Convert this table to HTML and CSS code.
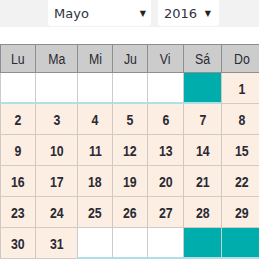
FILE: index.html
```html
<!DOCTYPE html>
<html lang="es">
<head>
<meta charset="utf-8">
<title>Calendario</title>
<link rel="stylesheet" href="styles.css">
</head>
<body>
<div class="toolbar">
  <div class="select month"><span>Mayo</span><span class="arrow">▼</span></div>
  <div class="select year"><span>2016</span><span class="arrow">▼</span></div>
</div>
<div class="calendar">
  <div class="head"><span>Lu</span></div>
  <div class="head"><span>Ma</span></div>
  <div class="head"><span>Mi</span></div>
  <div class="head"><span>Ju</span></div>
  <div class="head"><span>Vi</span></div>
  <div class="head"><span>Sá</span></div>
  <div class="head"><span>Do</span></div>

  <div class="cell empty"></div>
  <div class="cell empty"></div>
  <div class="cell empty"></div>
  <div class="cell empty"></div>
  <div class="cell empty"></div>
  <div class="cell empty teal"></div>
  <div class="cell day"><span>1</span></div>

  <div class="cell day"><span>2</span></div>
  <div class="cell day"><span>3</span></div>
  <div class="cell day"><span>4</span></div>
  <div class="cell day"><span>5</span></div>
  <div class="cell day"><span>6</span></div>
  <div class="cell day"><span>7</span></div>
  <div class="cell day"><span>8</span></div>

  <div class="cell day"><span>9</span></div>
  <div class="cell day"><span>10</span></div>
  <div class="cell day"><span>11</span></div>
  <div class="cell day"><span>12</span></div>
  <div class="cell day"><span>13</span></div>
  <div class="cell day"><span>14</span></div>
  <div class="cell day"><span>15</span></div>

  <div class="cell day"><span>16</span></div>
  <div class="cell day"><span>17</span></div>
  <div class="cell day"><span>18</span></div>
  <div class="cell day"><span>19</span></div>
  <div class="cell day"><span>20</span></div>
  <div class="cell day"><span>21</span></div>
  <div class="cell day"><span>22</span></div>

  <div class="cell day"><span>23</span></div>
  <div class="cell day"><span>24</span></div>
  <div class="cell day"><span>25</span></div>
  <div class="cell day"><span>26</span></div>
  <div class="cell day"><span>27</span></div>
  <div class="cell day"><span>28</span></div>
  <div class="cell day"><span>29</span></div>

  <div class="cell day"><span>30</span></div>
  <div class="cell day"><span>31</span></div>
  <div class="cell empty"></div>
  <div class="cell empty"></div>
  <div class="cell empty"></div>
  <div class="cell empty teal"></div>
  <div class="cell empty teal"></div>
</div>
</body>
</html>
```
FILE: styles.css
```css
html, body {
  margin: 0;
  padding: 0;
  overflow: hidden;
  background: #ffffff;
}

.toolbar {
  height: 27px;
  background: #f2f2f2;
  display: flex;
  align-items: flex-start;
  padding-left: 48px;
  gap: 7px;
  margin-bottom: 17px;
}

.select {
  height: 26px;
  background: #ffffff;
  border-radius: 0 0 3px 3px;
  display: flex;
  align-items: center;
  justify-content: space-between;
  box-sizing: border-box;
  font-family: "DejaVu Sans", Verdana, sans-serif;
  font-size: 13px;
  color: #2f3340;
}

.month {
  width: 103px;
  padding: 0 5px 0 6px;
}

.year {
  width: 61px;
  padding: 0 8px 0 6px;
}

.arrow {
  font-size: 8px;
  color: #222;
}

.calendar {
  display: grid;
  grid-template-columns: 35px 42px 35px 35px 36px 38px 40px;
  width: 261px;
  font-family: "Liberation Sans", Arial, sans-serif;
  font-size: 14px;
  color: #2a2a33;
}

.head {
  height: 29px;
  box-sizing: border-box;
  background: #cccccc;
  border-top: 1px solid #8e8e8e;
  border-bottom: 1px solid #8e8e8e;
  border-left: 1px solid #8e8e8e;
  display: flex;
  align-items: center;
  justify-content: center;
}

.head span,
.day span {
  display: inline-block;
  transform: scaleX(0.88);
}

.cell {
  height: 31px;
  box-sizing: border-box;
  border-left: 1px solid #cfc9c4;
  border-bottom: 1px solid #d2cbc5;
  display: flex;
  align-items: center;
  justify-content: center;
}

.day {
  background: #fdeee3;
  font-weight: bold;
  padding-top: 2px;
}

.empty {
  background: #ffffff;
  border-left-color: #cccccc;
  border-bottom: 2px solid #b0e0e6;
}

.teal {
  background: #00adad;
}
```
